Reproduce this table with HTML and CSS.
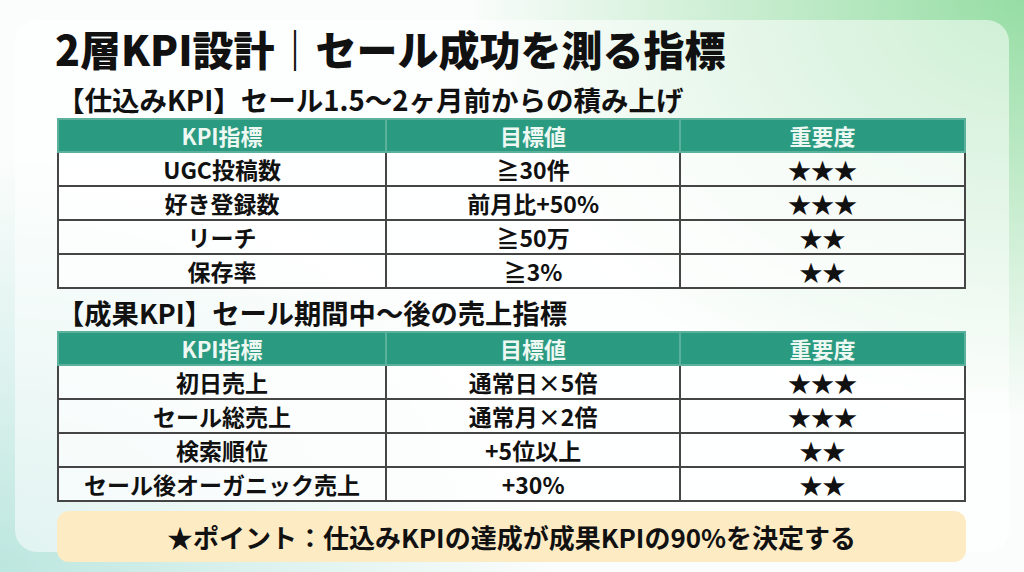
FILE: index.html
```html
<!DOCTYPE html>
<html lang="ja">
<head>
<meta charset="utf-8">
<title>2層KPI設計</title>
<link rel="stylesheet" href="styles.css">
</head>
<body>
<div class="page">
  <div class="card">
    <h1 class="title">2層KPI設計｜セール成功を測る指標</h1>

    <h2 class="section">【仕込みKPI】セール1.5〜2ヶ月前からの積み上げ</h2>
    <table class="kpi">
      <thead>
        <tr><th class="c1">KPI指標</th><th class="c2">目標値</th><th class="c3">重要度</th></tr>
      </thead>
      <tbody>
        <tr><td>UGC投稿数</td><td>≧30件</td><td>★★★</td></tr>
        <tr><td>好き登録数</td><td>前月比+50%</td><td>★★★</td></tr>
        <tr><td>リーチ</td><td>≧50万</td><td>★★</td></tr>
        <tr><td>保存率</td><td>≧3%</td><td>★★</td></tr>
      </tbody>
    </table>

    <h2 class="section second">【成果KPI】セール期間中〜後の売上指標</h2>
    <table class="kpi">
      <thead>
        <tr><th class="c1">KPI指標</th><th class="c2">目標値</th><th class="c3">重要度</th></tr>
      </thead>
      <tbody>
        <tr><td>初日売上</td><td>通常日×5倍</td><td>★★★</td></tr>
        <tr><td>セール総売上</td><td>通常月×2倍</td><td>★★★</td></tr>
        <tr><td>検索順位</td><td>+5位以上</td><td>★★</td></tr>
        <tr><td>セール後オーガニック売上</td><td>+30%</td><td>★★</td></tr>
      </tbody>
    </table>

    <div class="point">★ポイント：仕込みKPIの達成が成果KPIの90%を決定する</div>
  </div>
</div>
</body>
</html>
```

FILE: styles.css
```css
html, body {
  margin: 0;
  padding: 0;
}

body {
  width: 1024px;
  height: 572px;
  overflow: hidden;
  font-family: "Noto Sans CJK JP", "Noto Sans", sans-serif;
  color: #111;
}

.page {
  width: 1024px;
  height: 572px;
  box-sizing: border-box;
  padding: 20px 15px 0 15px;
  background:
    radial-gradient(ellipse 560px 420px at 100% 0%, #96dda4 0%, rgba(150, 221, 164, 0.6) 40%, rgba(150, 221, 164, 0) 100%),
    radial-gradient(ellipse 560px 420px at 0% 100%, #bce6df 0%, rgba(188, 230, 223, 0.5) 45%, rgba(188, 230, 223, 0) 100%),
    #fbfdfc;
}

.card {
  height: 532px;
  box-sizing: border-box;
  padding: 4px 43px 0 42px;
  border-radius: 22px;
  background: rgba(255, 255, 255, 0.52);
}

.title {
  margin: 0 0 0 -2px;
  font-size: 41px;
  line-height: 48px;
  font-weight: 900;
  white-space: nowrap;
}

.section {
  margin: 10px 0 2px 0;
  font-size: 27.5px;
  line-height: 34px;
  font-weight: 700;
  white-space: nowrap;
}

.section.second {
  margin-top: 6px;
  font-size: 27.3px;
}

.kpi {
  width: 909px;
  border-collapse: collapse;
  table-layout: fixed;
}

.kpi th,
.kpi td {
  padding: 0;
  text-align: center;
  font-weight: 700;
  white-space: nowrap;
}

.kpi th {
  height: 31px;
  font-size: 22px;
  line-height: 31px;
  color: #eef8f3;
  background: #2a9a80;
  border: 2px solid #5cb19c;
}

.kpi td {
  height: 32px;
  font-size: 23px;
  line-height: 32px;
  color: #111;
  background: rgba(255, 255, 255, 0.62);
  border: 2px solid #454545;
}

.kpi .c1 { width: 36.2%; }
.kpi .c2 { width: 32.4%; }
.kpi .c3 { width: 31.4%; }

.point {
  margin-top: 9px;
  height: 51px;
  border-radius: 12px;
  background: #fdebc4;
  font-size: 26px;
  line-height: 51px;
  font-weight: 700;
  text-align: center;
  white-space: nowrap;
  color: #111;
}
```
